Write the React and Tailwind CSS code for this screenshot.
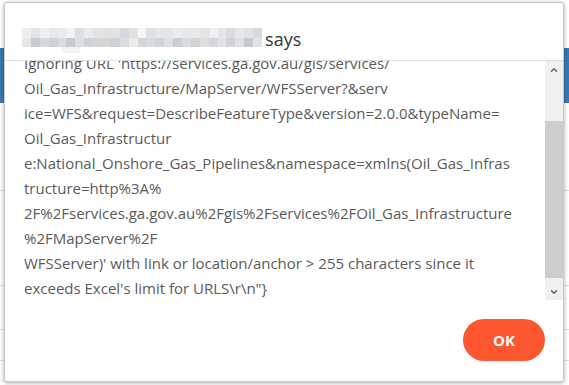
import { ChevronUp, ChevronDown } from 'lucide-react';

const blurRows = [
  ['#eceef0', '#e3e5e8', '#eef0f1', '#e6e8ea', '#e9ebee', '#f3f3f3', '#dcdee2', '#e8eaec', '#e2e4e6', '#dfe1e4', '#e4e3e2', '#d5d8de', '#e0e1e3', '#f6f6f7', '#dfe1e3', '#e5e6e8', '#e3e6e7', '#eaebec', '#e7e8ea', '#e9e9ea', '#e2e3e5', '#f0f0f1', '#e4e5e7', '#dadcdf', '#e6e7e9', '#e1e3e6', '#d7d9dc'],
  ['#e5e7e9', '#c8cbcf', '#d6d8db', '#ced1d5', '#d9dbde', '#c7cbd1', '#dcdee1', '#cfd2d6', '#d3d4d6', '#d8d6d4', '#cdd1d8', '#dadcdf', '#ececed', '#d4d6d9', '#d9dadc', '#d2d5d8', '#dde0e1', '#cacdd0', '#d9dbdd', '#d2d2d3', '#dcdddf', '#d6d7da', '#e2e3e5', '#d0d2d5', '#dee0e2', '#c6cacd', '#e1e3e5'],
];

const lines = [
  "Ignoring URL 'https://services.ga.gov.au/gis/services/",
  'Oil_Gas_Infrastructure/MapServer/WFSServer?&serv',
  'ice=WFS&request=DescribeFeatureType&version=2.0.0&typeName=',
  'Oil_Gas_Infrastructur',
  'e:National_Onshore_Gas_Pipelines&namespace=xmlns(Oil_Gas_Infras',
  'tructure=http%3A%',
  '2F%2Fservices.ga.gov.au%2Fgis%2Fservices%2FOil_Gas_Infrastructure',
  '%2FMapServer%2F',
  "WFSServer)' with link or location/anchor > 255 characters since it",
  'exceeds Excel\'s limit for URLS\\r\\n"}',
];

const App = () => {
  return (
    <div className="relative h-[385px] w-[569px] overflow-hidden bg-white font-['Open_Sans',sans-serif]">
      {/* page behind the dialog */}
      <div className="pt-[48px]">
        <div className="h-[55px] bg-[#3b78b2]" />
        <div className="mt-[87px] border-t border-[#dcdcdc]" />
        <div className="mt-[94px] border-t border-[#e2e2e2]" />
        <div className="mt-[43px] border-t border-[#e2e2e2]" />
        <div className="mt-[30px] border-t border-[#e2e2e2]" />
      </div>

      {/* alert dialog */}
      <div className="absolute left-[4px] top-[2px] flex h-[380px] w-[560px] flex-col rounded-[3px] border border-[#c9c9c9] bg-white shadow-[0_1px_4px_rgba(0,0,0,0.35)]">
        <div className="flex h-[58px] items-start border-b border-[#dedede] pl-[17px] pt-[24px]">
          <div className="flex items-center">
            <div className="relative">
              {blurRows.map((row, i) => (
                <div key={i} className="flex">
                  {row.map((c, j) => (
                    <div key={j} className="h-[9.5px] w-[8.9px]" style={{ backgroundColor: c }} />
                  ))}
                </div>
              ))}
              <div className="absolute left-[40px] top-[19px] flex">
                <div className="h-[6px] w-[9px] bg-[#f7f3f4]" />
                <div className="h-[6px] w-[9px] bg-[#f3f4f8]" />
              </div>
            </div>
            <span className="ml-[3px] mt-[3px] text-[18px] leading-none text-[#333]">says</span>
          </div>
        </div>

        <div className="flex h-[239px]">
          <div className="flex-1 overflow-hidden pl-[19px]">
            <div className="-mt-[10px] whitespace-nowrap text-[15px] leading-[25px] text-[#5a5a5a]">
              {lines.map((l, i) => (
                <div key={i}>{l}</div>
              ))}
            </div>
          </div>
          <div className="flex w-[18px] flex-col bg-[#f0f0f0]">
            <div className="flex h-[17px] items-center justify-center text-[#606060]">
              <ChevronUp className="h-[10px] w-[10px]" strokeWidth={3.5} />
            </div>
            <div className="mt-[43px] h-[157px] bg-[#cdcdcd]" />
            <div className="mt-auto flex h-[17px] items-center justify-center text-[#606060]">
              <ChevronDown className="h-[10px] w-[10px]" strokeWidth={3.5} />
            </div>
          </div>
        </div>

        <div className="flex justify-end pr-[18px] pt-[19px]">
          <button className="h-[42px] w-[82px] rounded-full bg-[#fe5630] text-[15px] font-bold text-white">
            OK
          </button>
        </div>
      </div>
    </div>
  );
};

export default App;
